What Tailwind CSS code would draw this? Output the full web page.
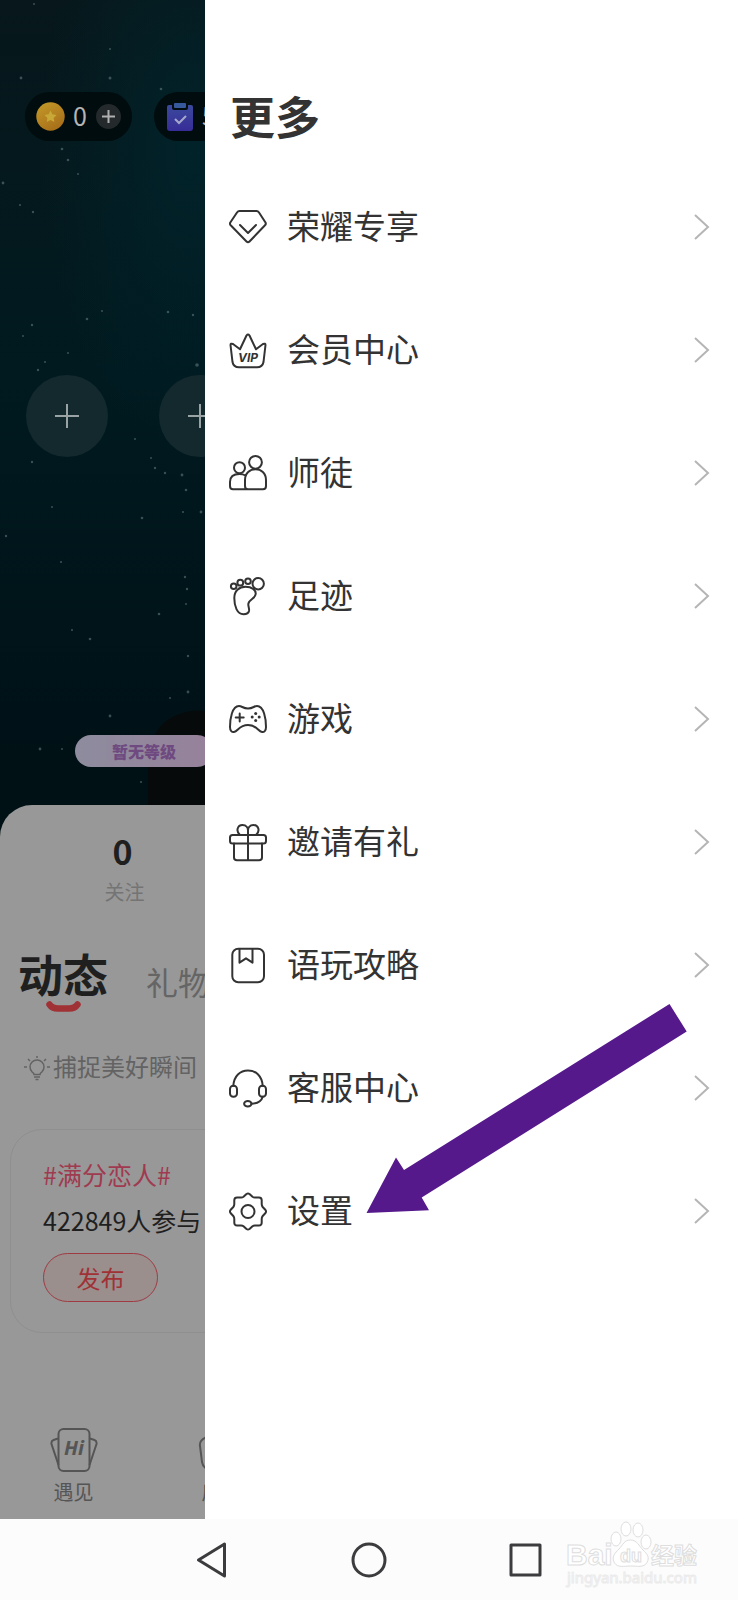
<!DOCTYPE html>
<html lang="zh-CN">
<head>
<meta charset="utf-8">
<meta name="viewport" content="width=device-width, initial-scale=1">
<title>更多</title>
<script src="https://cdn.jsdelivr.net/npm/@tailwindcss/browser@4"></script>
</head>
<body class="relative flex min-h-screen flex-col bg-white font-['Noto_Sans_CJK_SC',sans-serif] text-[#333333]">
<div class="flex flex-1">

  <!-- Dimmed profile page behind the drawer -->
  <section class="relative flex w-[205px] shrink-0 flex-col overflow-hidden bg-linear-to-b from-[#07171b] from-0% via-[#001a20] via-25% to-[#001116] to-50%">
    <svg class="absolute left-0 top-0 h-[840px] w-[205px]" viewBox="0 0 205 840" aria-hidden="true">
      <defs>
        <radialGradient id="glow"><stop offset="0" stop-color="#00272f" stop-opacity=".7"/><stop offset="1" stop-color="#00272f" stop-opacity="0"/></radialGradient>
      </defs>
      <ellipse cx="190" cy="150" rx="150" ry="300" fill="url(#glow)"/>
      <path d="M148 840V760Q152 722 180 714Q192 709 205 711V840Z" fill="#060a0b"/>
      <g fill="#6f8a8e" fill-opacity=".5">
        <circle cx="21" cy="78" r="1.4"/><circle cx="110" cy="78" r="1.5"/><circle cx="161" cy="89" r="1.3"/><circle cx="34" cy="4" r="1"/><circle cx="110" cy="49" r="1"/><circle cx="62" cy="149" r="1.3"/><circle cx="68" cy="160" r="1.3"/><circle cx="78" cy="174" r="1"/><circle cx="3" cy="183" r="1.4"/><circle cx="20" cy="205" r="1.1"/><circle cx="33" cy="212" r="1.2"/><circle cx="87" cy="319" r="1.3"/><circle cx="102" cy="311" r="1"/><circle cx="32" cy="325" r="1.2"/><circle cx="23" cy="336" r="1"/><circle cx="168" cy="312" r="1.3"/><circle cx="193" cy="315" r="1.2"/><circle cx="197" cy="365" r="1.8"/><circle cx="38" cy="370" r="1.2"/><circle cx="45" cy="362" r="1"/><circle cx="68" cy="353" r="1"/><circle cx="32" cy="462" r="1.2"/><circle cx="135" cy="439" r="1"/><circle cx="151" cy="458" r="1"/><circle cx="155" cy="468" r="1.2"/><circle cx="165" cy="473" r="1.2"/><circle cx="182" cy="475" r="1.4"/><circle cx="186" cy="490" r="1.3"/><circle cx="142" cy="518" r="1.3"/><circle cx="183" cy="512" r="1.1"/><circle cx="201" cy="512" r="1.4"/><circle cx="52" cy="507" r="1"/><circle cx="6" cy="536" r="1.2"/><circle cx="61" cy="562" r="1.1"/><circle cx="185" cy="577" r="1.2"/><circle cx="187" cy="589" r="1.2"/><circle cx="159" cy="614" r="1.3"/><circle cx="186" cy="604" r="1"/><circle cx="72" cy="630" r="1.1"/><circle cx="90" cy="639" r="1.3"/><circle cx="188" cy="656" r="1.2"/><circle cx="188" cy="692" r="1.4"/><circle cx="170" cy="698" r="1"/><circle cx="110" cy="716" r="1.4"/><circle cx="40" cy="749" r="1.4"/><circle cx="62" cy="749" r="1"/><circle cx="141" cy="782" r="1.1"/>
      </g>
    </svg>

    <div class="relative mt-[92px] flex w-max gap-[22px] pl-[25px]">
      <button type="button" class="flex h-[49px] w-[107px] items-center rounded-full bg-[#010c0e] pl-[11px] text-[25px] leading-8 text-[#b5b5b5]" aria-label="金币 0">
        <svg class="size-[29px]" viewBox="0 0 29 29"><defs><linearGradient id="coin" x2=".6" y2="1"><stop stop-color="#c59b29"/><stop offset="1" stop-color="#a8701a"/></linearGradient></defs><circle cx="14.500" cy="14.500" r="14.200" fill="url(#coin)"/><path d="m14.500 8.500 1.900 3.800 4.200.6-3 3 .7 4.200-3.800-2-3.800 2 .7-4.200-3-3 4.200-.6Z" fill="#c8a836"/></svg>
        <span class="ml-2 pb-1">0</span>
        <svg class="ml-[9px] size-[25px]" viewBox="0 0 25 25"><circle cx="12.500" cy="12.500" r="12.500" fill="#24292b"/><path d="M12.500 6v13M6 12.500h13" stroke="#b0b0b0" stroke-width="2"/></svg>
      </button>
      <button type="button" class="flex h-[49px] w-[107px] items-center gap-2 rounded-full bg-[#010c0e] pl-3 text-[25px] leading-8 text-[#b5b5b5]" aria-label="任务">
        <svg class="size-7" viewBox="0 0 28 28"><defs><linearGradient id="clip" x2="0" y2="1"><stop stop-color="#3a4a9c"/><stop offset="1" stop-color="#382c98"/></linearGradient></defs><path d="M3 2h3v3q0 2 2 2h12q2 0 2-2V2h3q2 0 2 2v21q0 3-3 3H4q-3 0-3-3V4q0-2 2-2Z" fill="url(#clip)"/><rect x="8" y="0" width="12" height="5" rx="1" fill="#35599a"/><path d="m9 16 4 4 7-7" fill="none" stroke="#a7a7cc" stroke-width="2"/></svg>
        <span class="pb-1">5</span>
      </button>
    </div>

    <div class="relative mt-[234px] flex w-max gap-[51px] pl-[26px]">
      <button type="button" class="flex size-[82px] items-center justify-center rounded-full bg-[#13292e]" aria-label="添加"><svg class="size-6" viewBox="0 0 24 24" stroke="#9aa3a4" stroke-width="2"><path d="M12 0v24M0 12h24"/></svg></button>
      <button type="button" class="flex size-[82px] items-center justify-center rounded-full bg-[#13292e]" aria-label="添加"><svg class="size-6" viewBox="0 0 24 24" stroke="#9aa3a4" stroke-width="2"><path d="M12 0v24M0 12h24"/></svg></button>
    </div>

    <div class="relative ml-[75px] mt-[278px] flex h-8 w-[138px] items-center justify-center rounded-full bg-linear-to-r from-[#8e8c9e] to-[#96819a] text-base font-black text-[#6f4a80]">暂无等级</div>

    <div class="relative mt-[38px] flex flex-1 flex-col rounded-tl-[32px] bg-[#989898] pt-[27px]">
      <div class="flex w-[245px] flex-col items-center">
        <strong class="text-[34px] leading-[38px] text-[#1f1f1f]">0</strong>
        <span class="mt-2 pl-1 text-xl leading-7 text-[#747474]">关注</span>
      </div>
      <div class="mt-[38px] flex w-max items-center gap-[38px] pl-[18px]">
        <a href="#moments" class="relative text-[45px] font-bold leading-[60px] text-[#1f1f1f]">动态
          <svg class="absolute left-7 top-[57px] h-3 w-[35px]" viewBox="0 0 35 12" aria-hidden="true"><path d="M3.500 3.500Q6 7.500 12 7.500H23Q29 7.500 31.500 3.500" fill="none" stroke="#a03236" stroke-width="6.500" stroke-linecap="round"/></svg>
        </a>
        <a href="#gifts" class="pt-[14px] text-[32px] leading-10 text-[#656565]">礼物</a>
      </div>
      <div class="mt-12 flex w-max items-center gap-[3px] pl-6 text-2xl leading-7 text-[#636363]">
        <svg class="size-[26px]" viewBox="0 0 26 26" fill="none" stroke="currentColor" stroke-width="1.500"><path d="M10 19.500Q10 18 8 16.800A7 7 0 1 1 18 16.800Q16 18 16 19.500ZM10 22h6M11.500 24.500h3M13 1v2M4 4l2 2M22 4l-2 2M0 12h3M23 12h3"/></svg>
        <span class="pb-1">捕捉美好瞬间</span>
      </div>
      <article class="ml-[10px] mt-[45px] w-[420px] rounded-[32px] border border-[#8f8f8f] px-8 pb-[30px] pt-7">
        <h2 class="text-[25px] leading-8 text-[#a03a50]">#满分恋人#</h2>
        <p class="mt-[14px] text-[25px] leading-8 text-[#1f1f1f]">422849人参与</p>
        <button type="button" class="mt-[17px] block h-[49px] w-[115px] rounded-full border border-[#a03a42] bg-[#9b8f8e] text-2xl leading-8 text-[#a03236]">发布</button>
      </article>
      <nav class="mt-auto flex w-max pb-[15px] text-xl leading-6 text-[#555555]">
        <a href="#meet" class="flex w-[147px] flex-col items-center gap-2">
          <svg class="h-11 w-12" viewBox="0 0 48 44" fill="none" stroke="currentColor" stroke-width="2"><rect x="8.500" y="1" width="31" height="42" rx="5"/><path d="M8 10.500 3.500 12Q1 13 1.500 16L8.500 37M40 10.500 44.500 12Q47 13 46.500 16L39.500 37"/><text x="24" y="27" text-anchor="middle" font-family="Noto Sans" font-size="20" font-weight="700" font-style="italic" fill="currentColor" stroke="none">Hi</text></svg>
          <span>遇见</span>
        </a>
        <a href="#rooms" class="flex w-[149px] flex-col items-center gap-2">
          <svg class="h-11 w-12" viewBox="0 0 48 44" fill="none" stroke="currentColor" stroke-width="2"><path d="M9 9Q1 12 2 18L4 34Q5 40 11 42H37Q43 40 44 34L46 18Q47 12 39 9Q24 0 9 9Z"/></svg>
          <span>房间</span>
        </a>
      </nav>
    </div>
  </section>

  <!-- Drawer -->
  <main class="flex min-w-0 flex-1 flex-col pl-[23px] pr-7 pt-[86px]">
    <h1 class="pl-[2px] text-[45px] font-bold leading-[60px]">更多</h1>
    <nav class="mt-[19px] flex flex-col text-[33px] leading-[48px]">
      <a href="#honor" class="flex h-[123px] items-center">
        <svg class="size-10" viewBox="0 0 40 40" fill="none" stroke="currentColor" stroke-width="2" stroke-linejoin="round" stroke-linecap="round"><path d="M11.500 4H28.500Q30 4 31 5.500L37.500 15.500Q38.300 17 37 18.300L21.500 34.500Q20 36 18.500 34.500L2.700 18.300Q1.500 17 2.300 15.500L9 5.500Q10 4 11.500 4ZM12 18l8 8 8-8"/></svg>
        <span class="ml-[19px] flex-1 pb-1">荣耀专享</span>
        <svg class="h-[26px] w-4" viewBox="0 0 16 26" fill="none" stroke="#b5b5b5" stroke-width="2"><path d="m1 1 13 12L1 25"/></svg>
      </a>
      <a href="#vip" class="flex h-[123px] items-center">
        <svg class="size-10" viewBox="0 0 40 40" fill="none" stroke="currentColor" stroke-width="2" stroke-linejoin="round" stroke-linecap="round"><path d="M2.500 15Q2.500 13 5 14L12 19.300 18.500 5.500Q20 3.500 21.500 5.500L28 19.300 35 14Q37.500 13 37.500 15L35.500 32Q34.500 37.300 29 37.300H11Q5.500 37.300 4.500 32Z"/><text x="20" y="32" text-anchor="middle" font-family="Inter" font-size="12" font-weight="700" font-style="italic" fill="currentColor" stroke="none">VIP</text></svg>
        <span class="ml-[19px] flex-1 pb-1">会员中心</span>
        <svg class="h-[26px] w-4" viewBox="0 0 16 26" fill="none" stroke="#b5b5b5" stroke-width="2"><path d="m1 1 13 12L1 25"/></svg>
      </a>
      <a href="#mentor" class="flex h-[123px] items-center">
        <svg class="size-10" viewBox="0 0 40 40" fill="none" stroke="currentColor" stroke-width="2" stroke-linejoin="round" stroke-linecap="round"><circle cx="27.500" cy="9.300" r="6.400"/><circle cx="11.500" cy="14.700" r="5.500"/><path d="M20 36.300H35Q38 36.300 38 33V27C38 20 33 16.300 27.500 16.300S17 20 17 27V33Q17 36.300 20 36.300ZM20 36.300H5Q2 36.300 2 33V29C2 23.500 6 21 11.500 21Q15 21 17.500 22.500"/></svg>
        <span class="ml-[19px] flex-1 pb-1">师徒</span>
        <svg class="h-[26px] w-4" viewBox="0 0 16 26" fill="none" stroke="#b5b5b5" stroke-width="2"><path d="m1 1 13 12L1 25"/></svg>
      </a>
      <a href="#footprint" class="flex h-[123px] items-center">
        <svg class="size-10" viewBox="0 0 40 40" fill="none" stroke="currentColor" stroke-width="2" stroke-linejoin="round" stroke-linecap="round"><circle cx="5.700" cy="10.300" r="2.800"/><circle cx="12.300" cy="6.700" r="2.900"/><circle cx="20" cy="5.300" r="2.800"/><circle cx="30.200" cy="7.700" r="5.700"/><path d="M6.300 22C6.300 15 11 10.700 17.500 10.700S28 14 27.700 18C27.300 23 20.500 23.500 20.300 28C20.200 31 21.500 32 21 35C20.500 37.500 18 38.300 15.500 38.300C9 38.300 6.300 30 6.300 22Z"/></svg>
        <span class="ml-[19px] flex-1 pb-1">足迹</span>
        <svg class="h-[26px] w-4" viewBox="0 0 16 26" fill="none" stroke="#b5b5b5" stroke-width="2"><path d="m1 1 13 12L1 25"/></svg>
      </a>
      <a href="#games" class="flex h-[123px] items-center">
        <svg class="size-10" viewBox="0 0 40 40" fill="none" stroke="currentColor" stroke-width="2" stroke-linejoin="round" stroke-linecap="round"><path d="M11 7C14 7 15 9.500 20 9.500S26 7 29 7C36 7 38 20 38 28C38 32 36 33.300 34 33C30 32.500 29 26 20 26S10 32.500 6 33C4 33.300 2 32 2 28C2 20 4 7 11 7ZM11.700 14.500v8M7.700 18.500h8"/><g fill="currentColor" stroke="none"><circle cx="27.700" cy="14.500" r="1.500"/><circle cx="27.700" cy="21.500" r="1.500"/><circle cx="24.200" cy="18" r="1.500"/><circle cx="31.200" cy="18" r="1.500"/></g></svg>
        <span class="ml-[19px] flex-1 pb-1">游戏</span>
        <svg class="h-[26px] w-4" viewBox="0 0 16 26" fill="none" stroke="#b5b5b5" stroke-width="2"><path d="m1 1 13 12L1 25"/></svg>
      </a>
      <a href="#invite" class="flex h-[123px] items-center">
        <svg class="size-10" viewBox="0 0 40 40" fill="none" stroke="currentColor" stroke-width="2" stroke-linejoin="round" stroke-linecap="round"><rect x="2" y="13" width="36" height="8.500" rx="2.500"/><path d="M6 21.500V35.500Q6 38.300 9 38.300H31Q34 38.300 34 35.500V21.500M20 13V38.300M12 13C7.500 9 9.500 3 14.500 3C18.500 3 20 6 20 8.500C20 6 21.500 3 25.500 3C30.500 3 32.500 9 28 13M20 8.500V13"/></svg>
        <span class="ml-[19px] flex-1 pb-1">邀请有礼</span>
        <svg class="h-[26px] w-4" viewBox="0 0 16 26" fill="none" stroke="#b5b5b5" stroke-width="2"><path d="m1 1 13 12L1 25"/></svg>
      </a>
      <a href="#guide" class="flex h-[123px] items-center">
        <svg class="size-10" viewBox="0 0 40 40" fill="none" stroke="currentColor" stroke-width="2" stroke-linejoin="round" stroke-linecap="round"><rect x="4.300" y="3.700" width="31.700" height="33.600" rx="6"/><path d="M11.500 4V17.700L18 13.300 24.500 17.700V4"/></svg>
        <span class="ml-[19px] flex-1 pb-1">语玩攻略</span>
        <svg class="h-[26px] w-4" viewBox="0 0 16 26" fill="none" stroke="#b5b5b5" stroke-width="2"><path d="m1 1 13 12L1 25"/></svg>
      </a>
      <a href="#service" class="flex h-[123px] items-center">
        <svg class="size-10" viewBox="0 0 40 40" fill="none" stroke="currentColor" stroke-width="2" stroke-linejoin="round" stroke-linecap="round"><rect x="2" y="17.700" width="7" height="11" rx="3.300"/><rect x="31" y="17.700" width="7" height="11" rx="3.300"/><path d="M5.300 17.700C6 8 12 2.500 20 2.500S34 8 34.700 17.700M34.700 28.700C33.500 33 29 35.500 23.500 35.700"/><ellipse cx="19.800" cy="35.700" rx="3.700" ry="2.700"/></svg>
        <span class="ml-[19px] flex-1 pb-1">客服中心</span>
        <svg class="h-[26px] w-4" viewBox="0 0 16 26" fill="none" stroke="#b5b5b5" stroke-width="2"><path d="m1 1 13 12L1 25"/></svg>
      </a>
      <a href="#settings" class="flex h-[123px] items-center">
        <svg class="size-10" viewBox="0 0 40 40" fill="none" stroke="currentColor" stroke-width="2" stroke-linejoin="round" stroke-linecap="round"><circle cx="20" cy="20.500" r="6.500"/><path d="M18.500 3Q20 2 21.500 3L24.500 5.800Q25.500 6.500 26.800 6.500H31Q33.500 6.500 33.700 9V13Q33.700 14.800 34.700 16L37.500 19Q38.600 20.500 37.500 22L34.700 25Q33.700 26.200 33.700 28V32Q33.500 34.500 31 34.500H26.800Q25.500 34.500 24.500 35.200L21.500 38Q20 39 18.500 38L15.500 35.200Q14.500 34.500 13.200 34.500H9Q6.500 34.500 6.300 32V28Q6.300 26.200 5.300 25L2.500 22Q1.400 20.500 2.500 19L5.300 16Q6.300 14.800 6.300 13V9Q6.500 6.500 9 6.500H13.200Q14.500 6.500 15.500 5.800Z"/></svg>
        <span class="ml-[19px] flex-1 pb-1">设置</span>
        <svg class="h-[26px] w-4" viewBox="0 0 16 26" fill="none" stroke="#b5b5b5" stroke-width="2"><path d="m1 1 13 12L1 25"/></svg>
      </a>
    </nav>
  </main>
</div>

<!-- System navigation -->
<footer class="flex h-[81px] items-center justify-center gap-[121px] bg-[#fcfcfc] text-[#3c3c3e]">
  <button type="button" aria-label="返回"><svg class="size-9" viewBox="0 0 36 36" fill="none" stroke="currentColor" stroke-width="3" stroke-linejoin="round"><path d="M4.500 18 30.500 2V34Z"/></svg></button>
  <button type="button" aria-label="主页"><svg class="size-9" viewBox="0 0 36 36" fill="none" stroke="currentColor" stroke-width="3"><circle cx="18" cy="18" r="16"/></svg></button>
  <button type="button" aria-label="最近任务"><svg class="size-9" viewBox="0 0 36 36" fill="none" stroke="currentColor" stroke-width="3" stroke-linejoin="round"><rect x="3" y="3" width="29" height="30"/></svg></button>
</footer>

<!-- Pointer to the settings row -->
<svg class="pointer-events-none absolute left-[366px] top-[1004px] h-[210px] w-[322px]" viewBox="0 0 322 210" aria-hidden="true"><path d="M303.500 0 320.700 27.500 55.700 193.500 63 206.300.5 209 30 153.500 38 166Z" fill="#56198c"/></svg>

<!-- Watermark -->
<svg class="pointer-events-none absolute right-[34px] top-[1516px] h-20 w-36" viewBox="0 0 144 80" fill="#fff" stroke="#dedede" stroke-width="1" role="img" aria-label="Baidu 经验">
  <text x="6" y="49" font-family="Liberation Sans" font-size="30" font-weight="700">Bai</text>
  <ellipse cx="66" cy="13" rx="5" ry="7"/><ellipse cx="78" cy="14" rx="5" ry="7"/><ellipse cx="56" cy="23" rx="5" ry="7"/><ellipse cx="86" cy="26" rx="5" ry="7"/>
  <path d="M70.500 24C77 24 79 30 83 34S90 41 87 46.500C84 52 77 50 70.500 50S58 52 54.500 47C51 41 55 37 59 33S64 24 70.500 24Z"/>
  <text x="71" y="46" text-anchor="middle" font-family="Liberation Sans" font-size="18" font-weight="700">du</text>
  <text x="91" y="48" font-family="Noto Sans CJK SC" font-size="23" font-weight="700">经验</text>
  <text x="7" y="67" font-family="Noto Sans" font-size="15" stroke="#ebebeb">jingyan.baidu.com</text>
</svg>
</body>
</html>
